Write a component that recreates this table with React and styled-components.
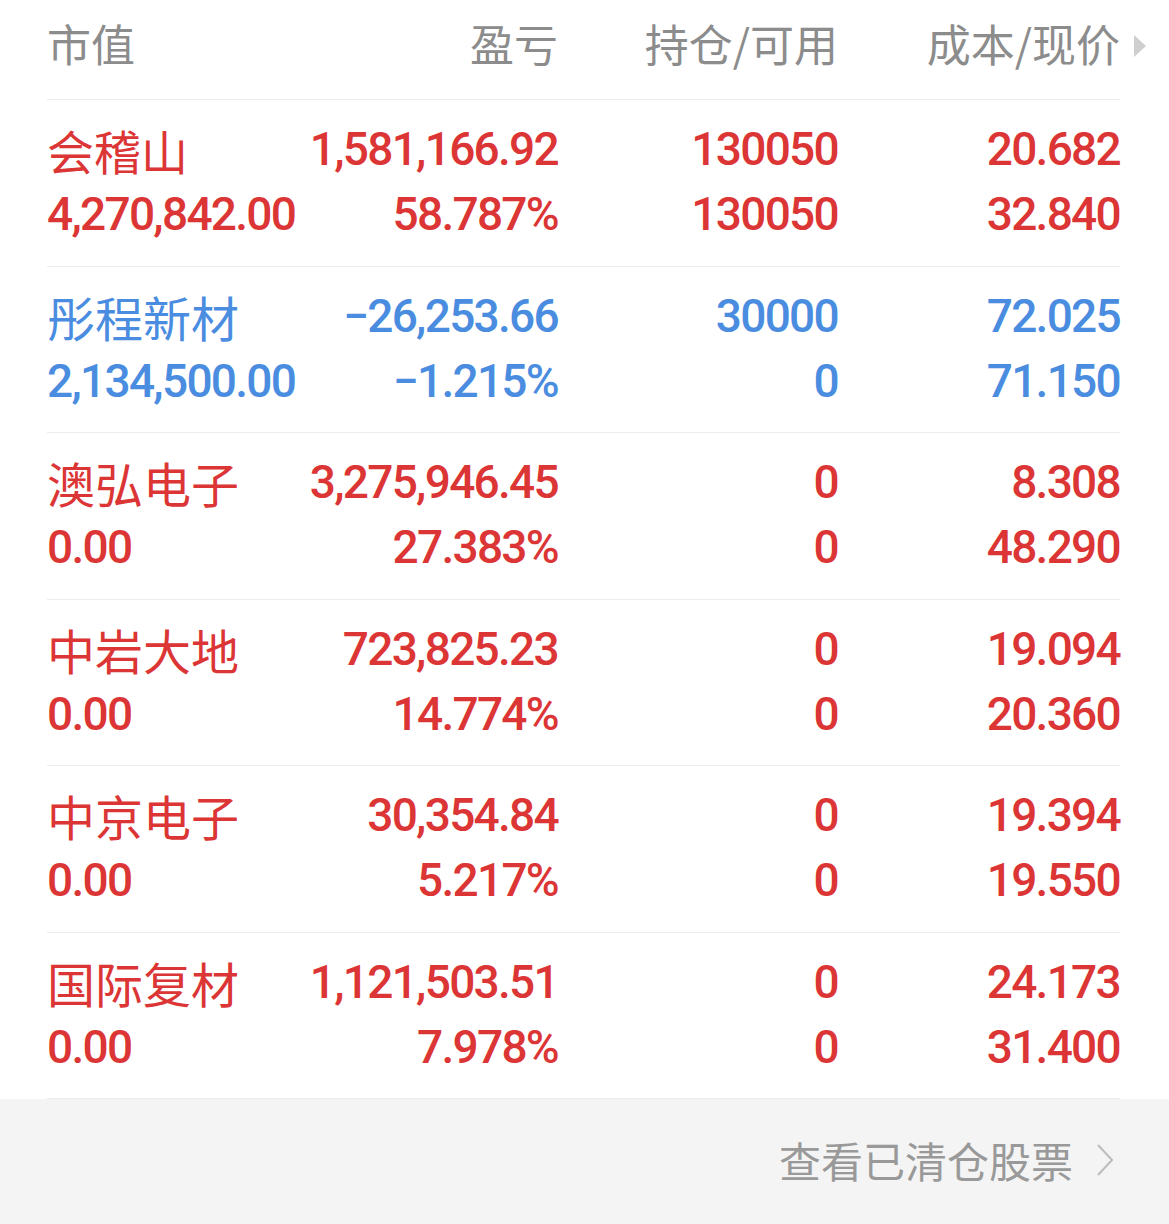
import React from 'react';
import styled, {createGlobalStyle} from 'styled-components';

const GlobalStyle = createGlobalStyle`
  html, body {
    margin: 0;
    padding: 0;
    background: #ffffff;
  }
`

const RED = '#dc3535'
const BLUE = '#4a8de0'

const Page = styled('div')`
  width: 1169px;
  min-height: 1224px;
  display: flex;
  flex-direction: column;
  background: #ffffff;
  font-family: "Noto Sans CJK SC", "Noto Sans", sans-serif;
`

const Table = styled('div')`
  padding: 0 49px 0 47px;
`

const Grid = styled('div')`
  display: grid;
  grid-template-columns: 250px 261px 280px 282px;
  border-bottom: 1px solid #ececec;
`

const HeaderRow = styled(Grid)`
  height: 100px;
  box-sizing: border-box;
  padding-bottom: 13px;
`

const HeadCell = styled('div')`
  position: relative;
  font-size: 44px;
  line-height: 87px;
  color: #8c8c8c;
  text-align: ${p => (p.$left ? 'left' : 'right')};
  white-space: nowrap;
`

const SortArrow = styled('span')`
  position: absolute;
  right: -26px;
  top: 35px;
  width: 0;
  height: 0;
  border-top: 11px solid transparent;
  border-bottom: 11px solid transparent;
  border-left: 12px solid #cfcfcf;
`

const Row = styled(Grid)`
  padding: 17px 0 18.5px;
  color: ${p => p.$color};
`

const Cell = styled('div')`
  display: flex;
  flex-direction: column;
  align-items: ${p => (p.$left ? 'flex-start' : 'flex-end')};
  white-space: nowrap;
`

const Name = styled('div')`
  font-size: ${p => (p.$chars > 3 ? 48 : 47)}px;
  line-height: 65px;
`

const Num = styled('div')`
  font-family: Roboto, "Liberation Sans", sans-serif;
  font-weight: 500;
  font-size: 46px;
  line-height: 65px;
  letter-spacing: -1.7px;
`

const Footer = styled('div')`
  flex: 1;
  background: #f4f4f4;
  display: flex;
  align-items: center;
  justify-content: flex-end;
  gap: 24px;
  padding: 0 56px 4px 0;
`

const FooterText = styled('span')`
  font-size: 42px;
  color: #999999;
`

const Chevron = () => (
    <svg width="16" height="32" viewBox="0 0 16 32">
        <polyline points="1,1 15,16 1,31" fill="none" stroke="#bdbdbd" strokeWidth="2"/>
    </svg>
)

const stocks = [
    {name: '会稽山', value: '4,270,842.00', pl: '1,581,166.92', pct: '58.787%', hold: '130050', avail: '130050', cost: '20.682', price: '32.840', color: RED},
    {name: '彤程新材', value: '2,134,500.00', pl: '-26,253.66', pct: '-1.215%', hold: '30000', avail: '0', cost: '72.025', price: '71.150', color: BLUE},
    {name: '澳弘电子', value: '0.00', pl: '3,275,946.45', pct: '27.383%', hold: '0', avail: '0', cost: '8.308', price: '48.290', color: RED},
    {name: '中岩大地', value: '0.00', pl: '723,825.23', pct: '14.774%', hold: '0', avail: '0', cost: '19.094', price: '20.360', color: RED},
    {name: '中京电子', value: '0.00', pl: '30,354.84', pct: '5.217%', hold: '0', avail: '0', cost: '19.394', price: '19.550', color: RED},
    {name: '国际复材', value: '0.00', pl: '1,121,503.51', pct: '7.978%', hold: '0', avail: '0', cost: '24.173', price: '31.400', color: RED},
]

const minus = s => s.replace('-', '\u2212')

class App extends React.Component {
    render() {
        return (
            <Page>
                <GlobalStyle/>
                <Table>
                    <HeaderRow>
                        <HeadCell $left>市值</HeadCell>
                        <HeadCell>盈亏</HeadCell>
                        <HeadCell>持仓/可用</HeadCell>
                        <HeadCell>成本/现价<SortArrow/></HeadCell>
                    </HeaderRow>
                    {stocks.map(s => (
                        <Row key={s.name} $color={s.color}>
                            <Cell $left>
                                <Name $chars={s.name.length}>{s.name}</Name>
                                <Num>{s.value}</Num>
                            </Cell>
                            <Cell>
                                <Num>{minus(s.pl)}</Num>
                                <Num>{minus(s.pct)}</Num>
                            </Cell>
                            <Cell>
                                <Num>{s.hold}</Num>
                                <Num>{s.avail}</Num>
                            </Cell>
                            <Cell>
                                <Num>{s.cost}</Num>
                                <Num>{s.price}</Num>
                            </Cell>
                        </Row>
                    ))}
                </Table>
                <Footer>
                    <FooterText>查看已清仓股票</FooterText>
                    <Chevron/>
                </Footer>
            </Page>
        );
    }
}

export default App;
